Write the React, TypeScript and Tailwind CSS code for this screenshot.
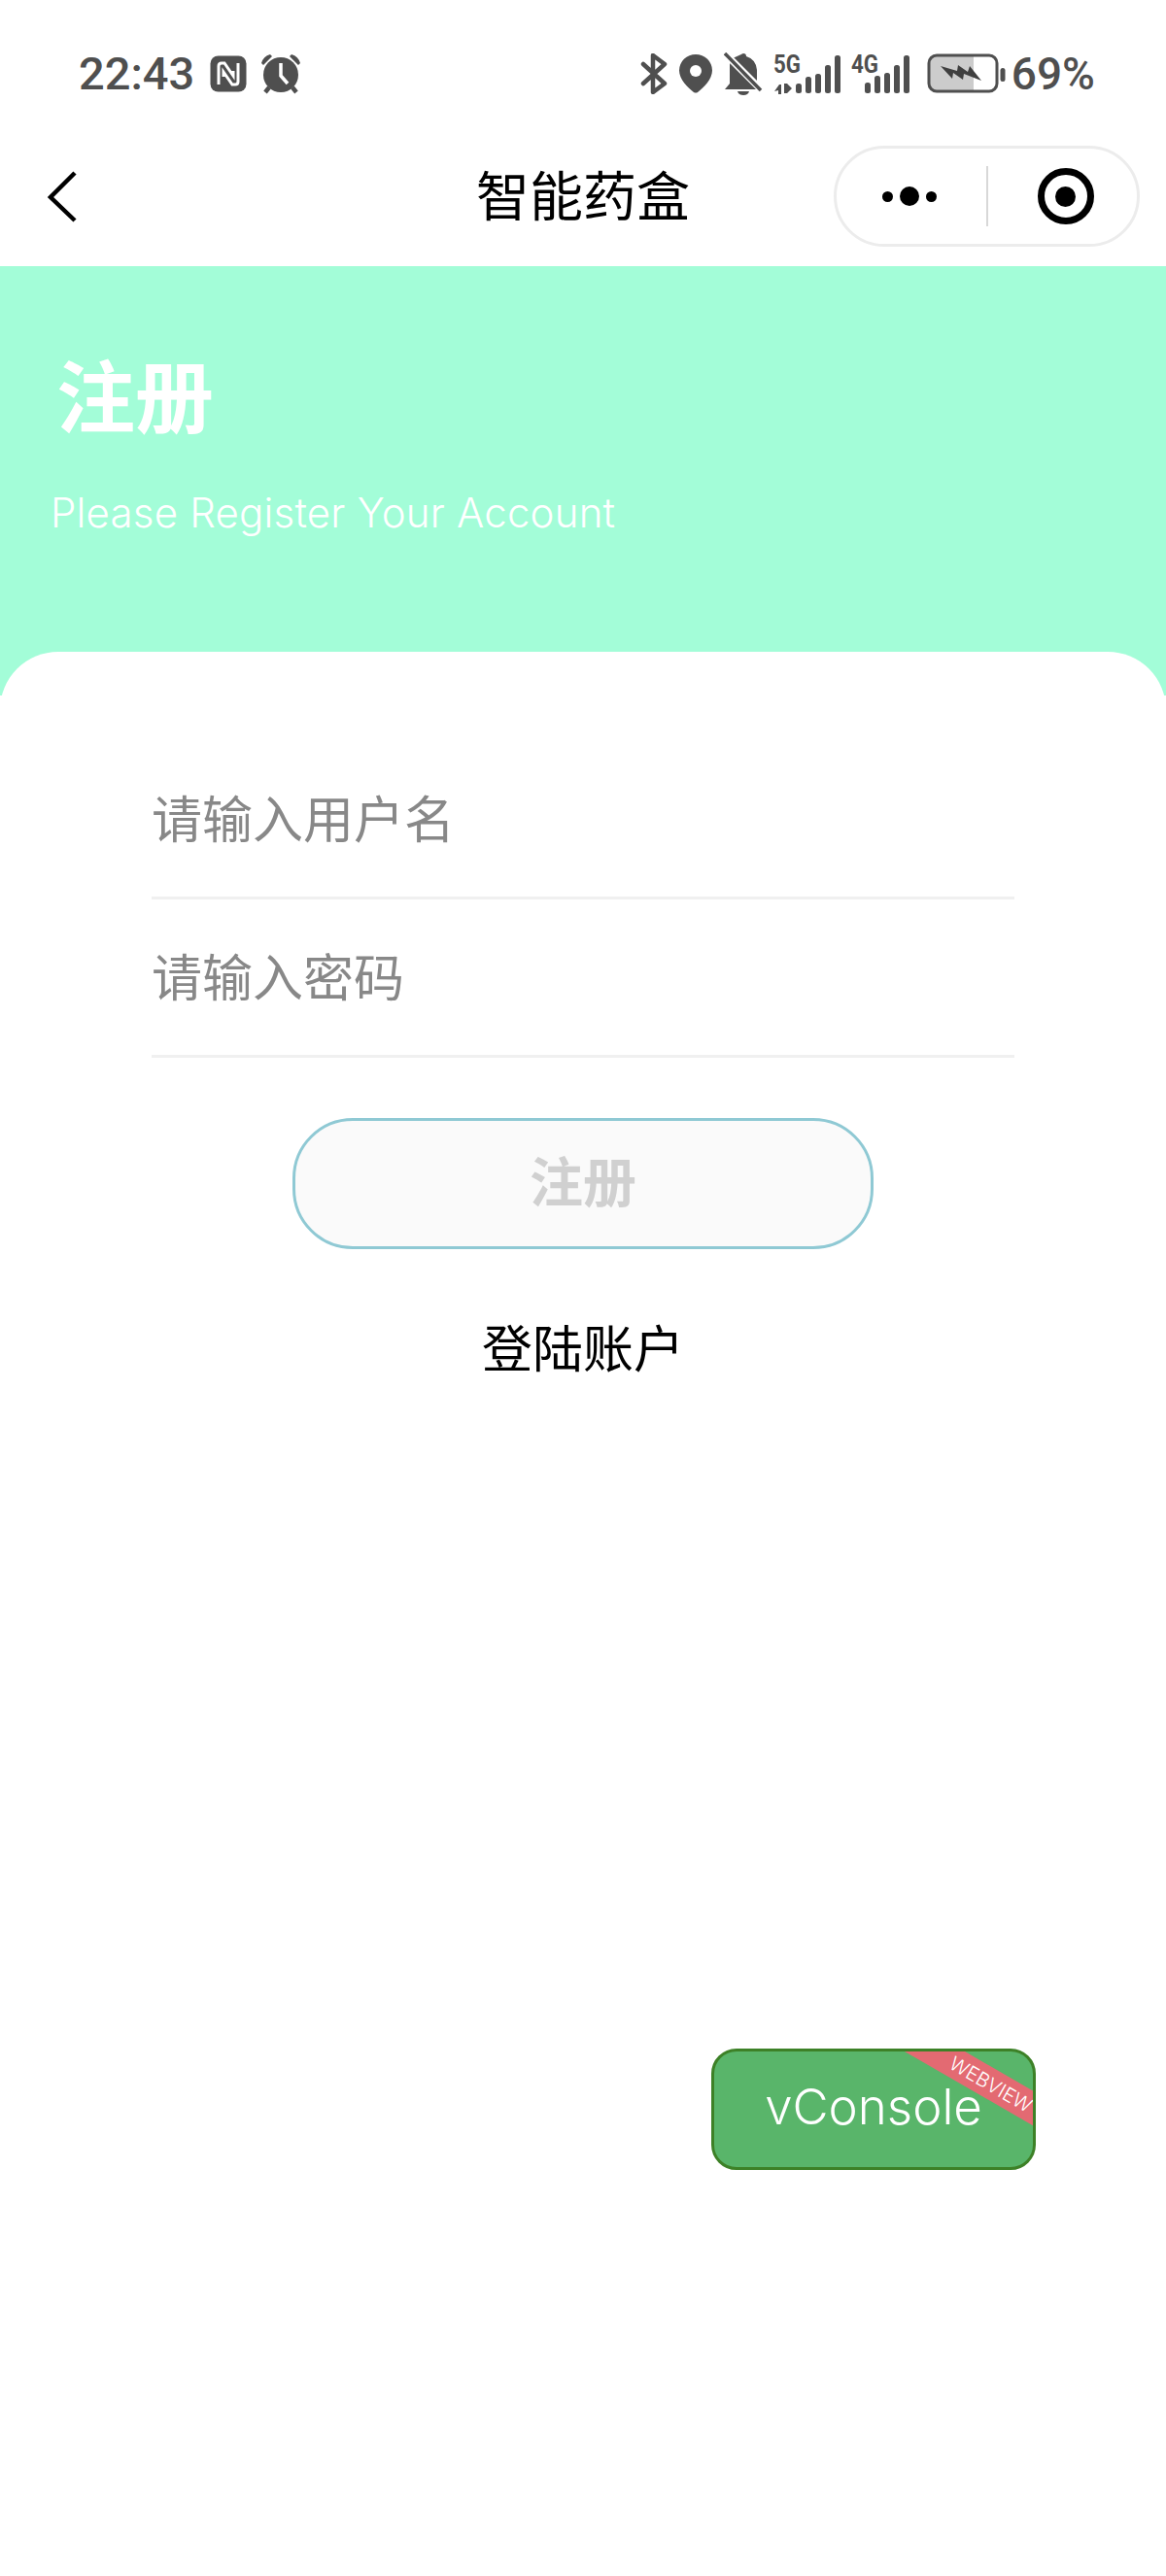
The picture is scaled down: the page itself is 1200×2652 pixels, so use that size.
import React from "react";

const INK = "#4f4f4f";
const CJK = "font-['Inter','Noto_Sans_CJK_SC',sans-serif]";

function Nfc() {
  return (
    <svg width="38" height="38" viewBox="0 0 38 38" className="ml-[16px] block">
      <rect x="0.5" y="0.5" width="37" height="37" rx="8" fill={INK} />
      <path d="M9 30V11q0-3 3-3h3l9 13v-5" fill="none" stroke="#fff" strokeWidth="3" />
      <path d="M29 8v19q0 3-3 3h-3L14 17v5" fill="none" stroke="#fff" strokeWidth="3" />
    </svg>
  );
}

function Alarm() {
  return (
    <svg width="42" height="42" viewBox="0 0 42 42" className="ml-[14px] block">
      <circle cx="21" cy="22" r="18" fill={INK} />
      <path d="M21 10v13l7 8" fill="none" stroke="#fff" strokeWidth="3.5" />
      <path d="M1 10q2-7 9-9l2 2-9 9zM41 10q-2-7-9-9l-2 2 9 9z" fill={INK} />
      <path d="M9 35l-4 5M33 35l4 5" stroke={INK} strokeWidth="4.5" />
    </svg>
  );
}

function Bluetooth() {
  return (
    <svg width="30" height="42" viewBox="0 0 30 42" className="block">
      <path d="M4 11l22 20-12 9V2l12 9L4 31" fill="none" stroke={INK} strokeWidth="4.5" strokeLinejoin="round" strokeLinecap="round" />
    </svg>
  );
}

function Pin() {
  return (
    <svg width="34" height="40" viewBox="0 0 34 40" className="ml-[11px] block">
      <path d="M17 0a17 16.5 0 0 1 17 16.5c0 9-9 18-15 22.500q-2 1-4 0C9 34.500 0 25.500 0 16.500A17 16.500 0 0 1 17 0z" fill={INK} />
      <circle cx="17" cy="17" r="6" fill="#fff" />
    </svg>
  );
}

function BellOff() {
  return (
    <svg width="40" height="44" viewBox="0 0 40 44" className="ml-[12px] block">
      <path d="M20 1q3 0 3 3q10 3 11 14v14l5 6H1l5-6V14q0-5 3-8z" fill={INK} />
      <path d="M14 40h12q-1 4-6 4t-6-4z" fill={INK} />
      <path d="M-2 -2L40 40" stroke="#fff" strokeWidth="7" />
      <path d="M1 1L38 39" stroke={INK} strokeWidth="3.500" />
    </svg>
  );
}

function Signal({ label, bars, arrows, width }: { label: string; bars: [number, number][]; arrows?: boolean; width: number }) {
  return (
    <svg width={width} height="42" viewBox={`0 0 ${width} 42`} className="block overflow-visible">
      <text x="0" y="20" fontFamily="Roboto, sans-serif" fontWeight="700" fontSize="25" textLength="28" lengthAdjust="spacingAndGlyphs" fill={INK}>
        {label}
      </text>
      {arrows && <path d="M1 39l5-7 2 0v10H5v-4zM11 31h3l5 5-5 5h-3z" fill={INK} />}
      {bars.map(([x, top]) => (
        <rect key={x} x={x} y={top} width="6" height={41 - top} rx="2.500" fill={INK} />
      ))}
    </svg>
  );
}

function Battery() {
  return (
    <svg width="82" height="42" viewBox="0 0 82 42" className="ml-[18px] block">
      <path d="M9 2h39v36H9q-7 0-7-7V9q0-7 7-7z" fill="#cccccc" />
      <rect x="2" y="2" width="70" height="37" rx="8" fill="none" stroke={INK} strokeWidth="3" />
      <rect x="75.500" y="15" width="5" height="14" rx="2.500" fill={INK} />
      <path d="M14 13l17 5 1-6 10 7 2-6 12 15-18-7-1 6-10-7-1 6z" fill="#3f3f3f" />
    </svg>
  );
}

function StatusBar() {
  return (
    <div className="flex h-[134px] items-start justify-between bg-white pl-[81px] pr-[73px] pt-[55px]">
      <div className="flex h-[42px] items-center">
        <span className="font-['Roboto',sans-serif] text-[47px] font-medium leading-[42px] text-[#4f4f4f]">22:43</span>
        <Nfc />
        <Alarm />
      </div>
      <div className="flex h-[42px] items-center">
        <Bluetooth />
        <Pin />
        <BellOff />
        <div className="ml-[11px]">
          <Signal width={68} arrows label="5G" bars={[[23, 31], [33, 24], [43, 21], [53, 12], [63, 2]]} />
        </div>
        <div className="ml-[12px]">
          <Signal width={60} label="4G" bars={[[14, 30], [24, 23], [34, 20], [44, 12], [54, 2]]} />
        </div>
        <Battery />
        <span className="ml-[5px] font-['Roboto',sans-serif] text-[46px] font-medium leading-[42px] text-[#4f4f4f]">69%</span>
      </div>
    </div>
  );
}

function NavBar() {
  return (
    <div className="grid h-[140px] grid-cols-[1fr_auto_1fr] items-center bg-white pb-[4px]">
      <svg width="80" height="70" viewBox="0 0 80 70" className="ml-[20px] block">
        <path d="M57 11L32 36l25 24" fill="none" stroke="#000" strokeWidth="4.500" />
      </svg>
      <div className={`${CJK} text-[55px] leading-none text-black`}>智能药盒</div>
      <div className="mr-[27px] flex h-[104px] w-[315px] items-center justify-self-end rounded-full border-[3px] border-[#ececec] bg-white">
        <div className="flex w-[154px] shrink-0 items-center justify-center gap-[7px] pr-[4px]">
          <span className="block size-[11px] rounded-full bg-black" />
          <span className="block size-[20px] rounded-full bg-black" />
          <span className="block size-[11px] rounded-full bg-black" />
        </div>
        <div className="h-[62px] w-[2px] shrink-0 bg-[#d8d8d8]" />
        <div className="flex w-[153px] shrink-0 items-center justify-center pl-[6px]">
          <span className="flex size-[58px] items-center justify-center rounded-full border-[7px] border-black">
            <span className="block size-[21px] rounded-full bg-black" />
          </span>
        </div>
      </div>
    </div>
  );
}

function Field({ text }: { text: string }) {
  return (
    <div className="flex h-[163px] items-center border-b-[3px] border-[#f0f0f0] pt-[3px]">
      <span className={`${CJK} text-[52px] leading-none text-[#888888]`}>{text}</span>
    </div>
  );
}

export default function App() {
  return (
    <div className="relative h-[2652px] w-[1200px] overflow-hidden bg-white">
      <StatusBar />
      <NavBar />
      <div className="h-[442px] bg-[#a3fdd8] pl-[52px]">
        <div className={`${CJK} pl-[6px] pt-[86px] text-[81px] font-bold leading-[100px] text-white`}>注册</div>
        <div className="mt-[43px] font-['Inter',sans-serif] text-[42px] font-light leading-[50px] tracking-[0.2px] text-white">Please Register Your Account</div>
      </div>
      <div className="-mt-[45px] rounded-t-[60px] bg-white pt-[92px]">
        <div className="mx-[156px]">
          <Field text="请输入用户名" />
          <Field text="请输入密码" />
        </div>
        <div className={`${CJK} mx-auto mt-[62px] flex h-[135px] w-[598px] items-center justify-center rounded-[62px] border-[3px] border-[#8fc9d4] bg-[#fafafa] pb-[3px] text-[55px] font-bold text-[#d0d0d0]`}>注册</div>
        <div className={`${CJK} mt-[69px] text-center text-[52px] leading-[70px] text-black`}>登陆账户</div>
      </div>
      <div className="absolute left-[732px] top-[2109px] flex h-[125px] w-[334px] items-center justify-center overflow-hidden rounded-[26px] border-[3px] border-[#3d8127] bg-[#59b56a] pb-[6px]">
        <span className="font-['Inter',sans-serif] text-[51px] font-light leading-none text-white">vConsole</span>
        <div className="absolute left-[175px] top-[18px] flex h-[31px] w-[220px] rotate-[30deg] items-center justify-center bg-[#e36a72] font-['Inter',sans-serif] text-[20px] font-light leading-none text-white">WEBVIEW</div>
      </div>
    </div>
  );
}
